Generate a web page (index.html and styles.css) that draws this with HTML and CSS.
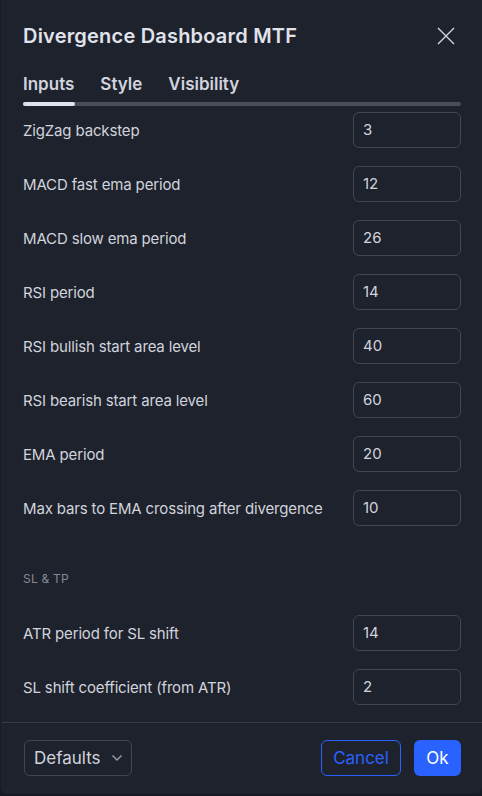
FILE: index.html
```html
<!DOCTYPE html>
<html>
<head>
<meta charset="utf-8">
<link rel="stylesheet" href="styles.css">
</head>
<body>
<div class="dialog">
  <div class="header">
    <div class="title">Divergence Dashboard MTF</div>
    <svg class="close" width="20" height="20" viewBox="0 0 20 20"><path d="M2 2L18 18M18 2L2 18" stroke="#d1d4dc" stroke-width="1.4" fill="none"/></svg>
  </div>
  <div class="tabs">
    <div class="tab active">Inputs</div>
    <div class="tab">Style</div>
    <div class="tab">Visibility</div>
  </div>
  <div class="tabline"><div class="tabline-active"></div></div>
  <div class="content">
    <div class="row"><div class="label">ZigZag backstep</div><div class="input">3</div></div>
    <div class="row"><div class="label">MACD fast ema period</div><div class="input">12</div></div>
    <div class="row"><div class="label">MACD slow ema period</div><div class="input">26</div></div>
    <div class="row"><div class="label">RSI period</div><div class="input">14</div></div>
    <div class="row"><div class="label">RSI bullish start area level</div><div class="input">40</div></div>
    <div class="row"><div class="label">RSI bearish start area level</div><div class="input">60</div></div>
    <div class="row"><div class="label">EMA period</div><div class="input">20</div></div>
    <div class="row"><div class="label">Max bars to EMA crossing after divergence</div><div class="input">10</div></div>
    <div class="section">SL &amp; TP</div>
    <div class="row"><div class="label">ATR period for SL shift</div><div class="input">14</div></div>
    <div class="row"><div class="label">SL shift coefficient (from ATR)</div><div class="input">2</div></div>
  </div>
  <div class="footer">
    <div class="defaults">Defaults<svg width="12" height="8" viewBox="0 0 12 8"><path d="M1.5 1.5L6 6L10.5 1.5" stroke="#9598a1" stroke-width="1.5" fill="none"/></svg></div>
    <div class="spacer"></div>
    <div class="btn cancel">Cancel</div>
    <div class="btn ok">Ok</div>
  </div>
</div>
</body>
</html>
```
FILE: styles.css
```css
html, body {
  margin: 0;
  padding: 0;
  background: #161a23;
}
body {
  font-family: Inter, "Noto Sans", sans-serif;
  color: #d1d4dc;
}
.dialog {
  width: 482px;
  height: 794px;
  background: #1e222d;
  border-radius: 0 0 6px 6px;
  box-sizing: border-box;
  border-left: 1px solid #1a1d27;
  display: flex;
  flex-direction: column;
}
.header {
  display: flex;
  align-items: center;
  justify-content: space-between;
  padding: 24px 26px 0 22px;
  height: 24px;
}
.title {
  font-size: 20px;
  font-weight: 600;
  color: #e0e3eb;
  letter-spacing: 0.2px;
}
.close {
  display: block;
}
.tabs {
  display: flex;
  gap: 26px;
  padding: 25px 0 0 22px;
  height: 26px;
}
.tab {
  font-size: 17px;
  font-weight: 600;
  color: #d1d4dc;
  line-height: 22px;
}
.tabline {
  margin: 3px 21px 0 22px;
  height: 4px;
  border-radius: 2px;
  background: #4a4d58;
}
.tabline-active {
  width: 52px;
  height: 4px;
  border-radius: 2px;
  background: #e0e3eb;
}
.content {
  padding: 6px 21px 0 22px;
  display: flex;
  flex-direction: column;
  gap: 18px;
  flex: 1;
}
.row {
  display: flex;
  align-items: center;
  justify-content: space-between;
  height: 36px;
}
.label {
  font-size: 15px;
  color: #d1d4dc;
  letter-spacing: -0.15px;
}
.input {
  width: 108px;
  height: 36px;
  box-sizing: border-box;
  border: 1px solid #434651;
  border-radius: 6px;
  padding-left: 9px;
  font-size: 15px;
  line-height: 34px;
  color: #d1d4dc;
}
.section {
  font-size: 12px;
  color: #868993;
  letter-spacing: 0.2px;
  height: 18px;
  line-height: 18px;
  margin-top: 26px;
  margin-bottom: 9px;
}
.footer {
  border-top: 1px solid #363a45;
  margin-left: 1px;
  display: flex;
  align-items: center;
  padding: 17px 21px 18px 22px;
  height: 36px;
}
.defaults {
  width: 108px;
  height: 36px;
  box-sizing: border-box;
  border: 1px solid #434651;
  border-radius: 6px;
  display: flex;
  align-items: center;
  justify-content: space-between;
  padding: 0 8px 0 9px;
  font-size: 17px;
  color: #d1d4dc;
}
.spacer {
  flex: 1;
}
.btn {
  height: 36px;
  box-sizing: border-box;
  border-radius: 6px;
  display: flex;
  align-items: center;
  justify-content: center;
  font-size: 17px;
}
.cancel {
  width: 80px;
  border: 1px solid #2962ff;
  color: #2962ff;
  margin-right: 13px;
}
.ok {
  width: 47px;
  background: #2962ff;
  color: #ffffff;
}
```
